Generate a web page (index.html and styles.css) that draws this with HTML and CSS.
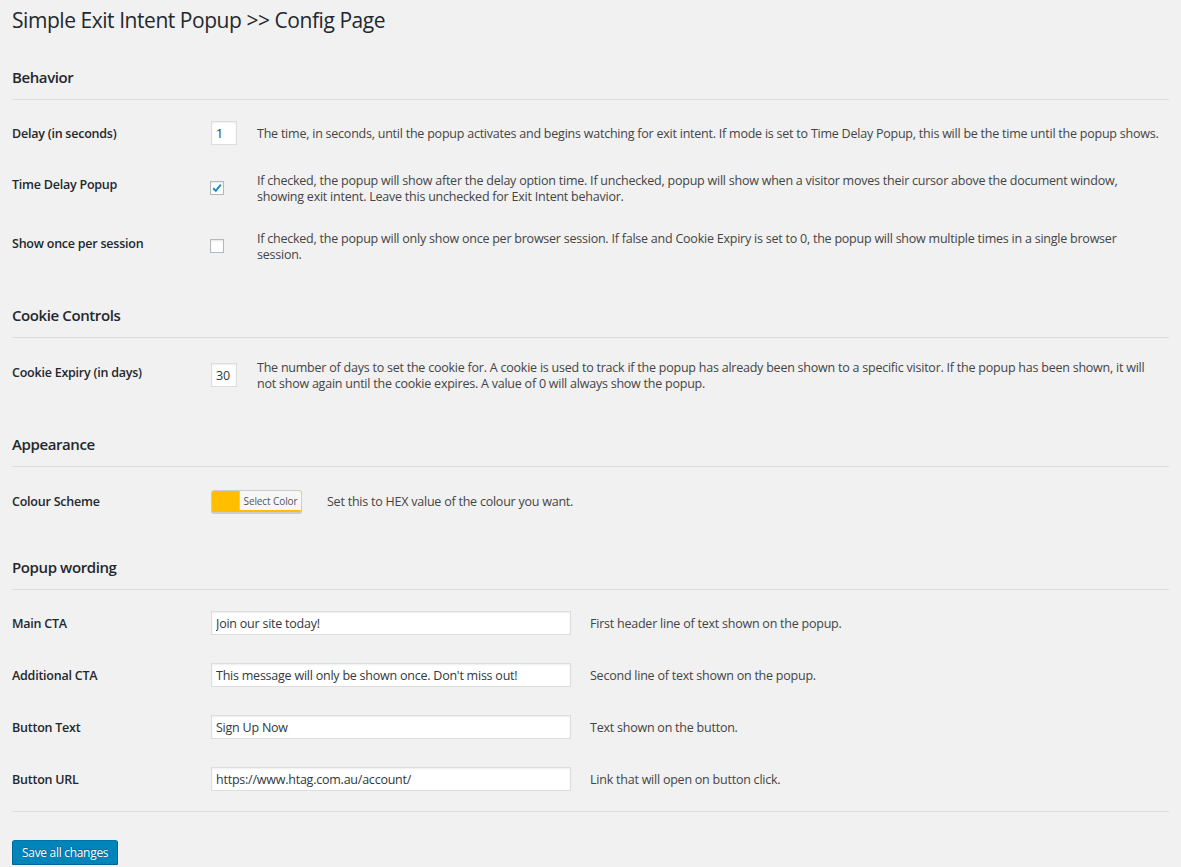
FILE: index.html
```
<!DOCTYPE html>
<html lang="en">
<head>
<meta charset="utf-8">
<title>Simple Exit Intent Popup &gt;&gt; Config Page</title>
<link rel="stylesheet" href="styles.css">
</head>
<body>
<div class="wrap">
  <h1 class="page-title">Simple Exit Intent Popup &gt;&gt; Config Page</h1>

  <section class="section s-behavior">
    <h2 class="section-title">Behavior</h2>
    <div class="rows">
      <div class="row r52">
        <div class="label">Delay (in seconds)</div>
        <div class="ctl"><input class="num" type="text" value="1"></div>
        <div class="desc">The time, in seconds, until the popup activates and begins watching for exit intent. If mode is set to Time Delay Popup, this will be the time until the popup shows.</div>
      </div>
      <div class="row r57">
        <div class="label up">Time Delay Popup</div>
        <div class="ctl"><span class="check on"><svg viewBox="0 0 14 14" width="14" height="14"><path d="M3.2 7.2 L5.8 9.8 L10.8 3.6" fill="none" stroke="#1e8cbe" stroke-width="2"/></svg></span></div>
        <div class="desc">If checked, the popup will show after the delay option time. If unchecked, popup will show when a visitor moves their cursor above the document window,<br>showing exit intent. Leave this unchecked for Exit Intent behavior.</div>
      </div>
      <div class="row r60">
        <div class="label up">Show once per session</div>
        <div class="ctl"><span class="check"></span></div>
        <div class="desc">If checked, the popup will only show once per browser session. If false and Cookie Expiry is set to 0, the popup will show multiple times in a single browser<br>session.</div>
      </div>
    </div>
  </section>

  <section class="section s-cookie">
    <h2 class="section-title">Cookie Controls</h2>
    <div class="rows">
      <div class="row r60">
        <div class="label up">Cookie Expiry (in days)</div>
        <div class="ctl"><input class="num" type="text" value="30"></div>
        <div class="desc">The number of days to set the cookie for. A cookie is used to track if the popup has already been shown to a specific visitor. If the popup has been shown, it will<br>not show again until the cookie expires. A value of 0 will always show the popup.</div>
      </div>
    </div>
  </section>

  <section class="section s-appearance">
    <h2 class="section-title">Appearance</h2>
    <div class="rows">
      <div class="row r54">
        <div class="label">Colour Scheme</div>
        <div class="ctl color-ctl">
          <button class="color-result" type="button"><span class="swatch"></span><span class="color-text">Select Color</span></button>
        </div>
        <div class="desc">Set this to HEX value of the colour you want.</div>
      </div>
    </div>
  </section>

  <section class="section s-wording">
    <h2 class="section-title">Popup wording</h2>
    <div class="rows">
      <div class="row r52">
        <div class="label">Main CTA</div>
        <div class="ctl wide"><input class="text" type="text" value="Join our site today!"></div>
        <div class="desc">First header line of text shown on the popup.</div>
      </div>
      <div class="row r52">
        <div class="label">Additional CTA</div>
        <div class="ctl wide"><input class="text" type="text" value="This message will only be shown once. Don't miss out!"></div>
        <div class="desc">Second line of text shown on the popup.</div>
      </div>
      <div class="row r52">
        <div class="label">Button Text</div>
        <div class="ctl wide"><input class="text" type="text" value="Sign Up Now"></div>
        <div class="desc">Text shown on the button.</div>
      </div>
      <div class="row r52">
        <div class="label">Button URL</div>
        <div class="ctl wide"><input class="text" type="text" value="https://www.htag.com.au/account/"></div>
        <div class="desc">Link that will open on button click.</div>
      </div>
    </div>
  </section>

  <div class="submit-area">
    <button class="button-primary" type="button">Save all changes</button>
  </div>
</div>
</body>
</html>
```

FILE: styles.css
```
html, body {
  margin: 0;
  padding: 0;
  background: #f1f1f1;
}
body {
  font-family: "Open Sans", "Noto Sans", "Liberation Sans", sans-serif;
  font-size: 12.5px;
  color: #444;
  letter-spacing: -0.23px;
}
.wrap {
  padding: 0 12px;
}
.page-title {
  margin: 0;
  padding-top: 6px;
  font-size: 21px;
  line-height: 29px;
  font-weight: 400;
  color: #23282d;
  letter-spacing: -0.45px;
}
.section-title {
  margin: 0;
  font-size: 15px;
  line-height: 20px;
  font-weight: 600;
  color: #23282d;
  letter-spacing: -0.4px;
  padding-bottom: 12px;
  border-bottom: 1px solid #ddd;
}
.s-behavior { margin-top: 32px; }
.s-cookie { margin-top: 29px; }
.s-appearance { margin-top: 29px; }
.s-wording { margin-top: 29px; }
.rows {
  padding-top: 7px;
}
.s-wording .rows {
  padding-bottom: 6px;
  border-bottom: 1px solid #ddd;
}
.row {
  display: flex;
  align-items: center;
}
.r52 { height: 52px; }
.r54 { height: 54px; }
.r57 { height: 57px; }
.r60 { height: 60px; }
.label {
  width: 199px;
  flex: none;
  font-weight: 600;
  color: #23282d;
  line-height: 16px;
  padding-top: 2px;
}
.label.up {
  margin-bottom: 7px;
}
.ctl {
  width: 46px;
  flex: none;
  display: flex;
  align-items: center;
}
.ctl.wide { width: 379px; }
.ctl.color-ctl { width: 116px; }
.desc {
  line-height: 16px;
  white-space: nowrap;
  color: #444;
  padding-top: 2px;
}
input {
  font-family: inherit;
  letter-spacing: inherit;
  font-size: 12.5px;
  color: #32373c;
  background: #fff;
  border: 1px solid #ddd;
  box-shadow: inset 0 1px 2px rgba(0, 0, 0, 0.07);
  box-sizing: border-box;
  height: 24px;
  padding: 1px 4px 0;
  margin: 0;
  outline: none;
}
.num { width: 26px; }
.text { width: 360px; }
.check {
  display: block;
  width: 14px;
  height: 14px;
  box-sizing: border-box;
  border: 1px solid #b4b9be;
  background: #fff;
  box-shadow: inset 0 1px 2px rgba(0, 0, 0, 0.1);
  position: relative;
  margin-left: -1px;
}
.check svg {
  position: absolute;
  left: -1px;
  top: -1px;
}
.color-result {
  display: flex;
  align-items: stretch;
  width: 91px;
  height: 23px;
  padding: 0;
  margin: 0;
  border: 1px solid #ccc;
  border-radius: 3px;
  background: #ffbe00;
  box-shadow: 0 1px 0 #ccc;
  overflow: hidden;
  cursor: pointer;
}
.swatch {
  width: 27px;
  flex: none;
}
.color-text {
  flex: 1;
  background: #f7f7f7;
  border-left: 1px solid #ccc;
  border-bottom: 1px solid #ffbe00;
  margin-bottom: 1px;
  font-family: "Open Sans", "Noto Sans", sans-serif;
  font-size: 10px;
  letter-spacing: -0.1px;
  color: #555;
  line-height: 20px;
  text-align: center;
}
.submit-area {
  padding-top: 28px;
}
.button-primary {
  font-family: inherit;
  font-size: 12px;
  letter-spacing: -0.3px;
  height: 25px;
  padding: 0 9px 1px;
  color: #fff;
  background: #0085ba;
  border: 1px solid #0073aa;
  border-color: #0073aa #006799 #006799;
  border-radius: 3px;
  box-shadow: 0 1px 0 #006799;
  text-shadow: 0 -1px 1px #006799, 1px 0 1px #006799;
  cursor: pointer;
}
```
